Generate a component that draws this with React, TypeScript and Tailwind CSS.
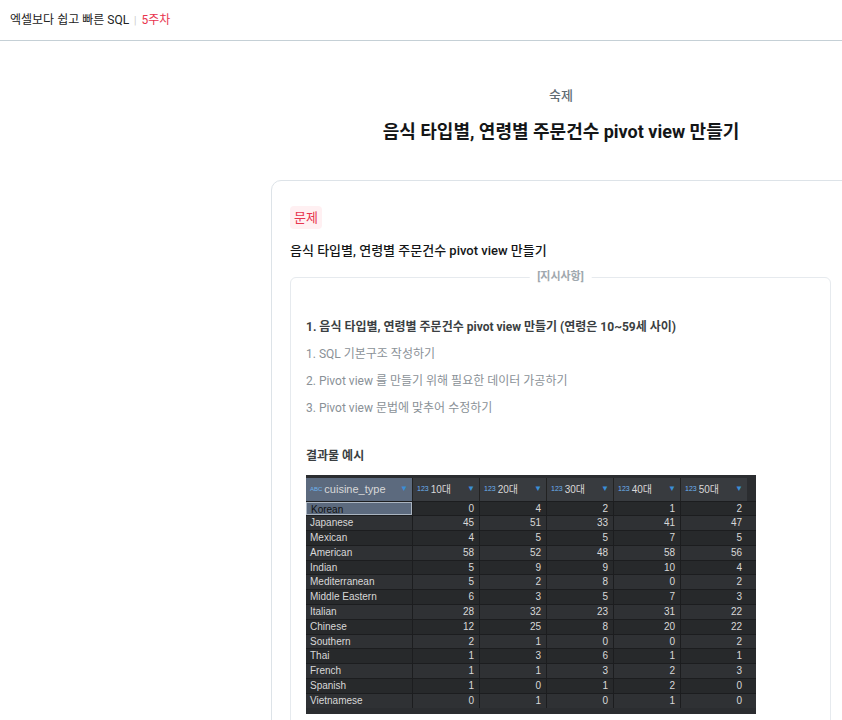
const rows: [string, number[]][] = [
  ["Korean", [0, 4, 2, 1, 2]],
  ["Japanese", [45, 51, 33, 41, 47]],
  ["Mexican", [4, 5, 5, 7, 5]],
  ["American", [58, 52, 48, 58, 56]],
  ["Indian", [5, 9, 9, 10, 4]],
  ["Mediterranean", [5, 2, 8, 0, 2]],
  ["Middle Eastern", [6, 3, 5, 7, 3]],
  ["Italian", [28, 32, 23, 31, 22]],
  ["Chinese", [12, 25, 8, 20, 22]],
  ["Southern", [2, 1, 0, 0, 2]],
  ["Thai", [1, 3, 6, 1, 1]],
  ["French", [1, 1, 3, 2, 3]],
  ["Spanish", [1, 0, 1, 2, 0]],
  ["Vietnamese", [0, 1, 0, 1, 0]],
];
const heads = ["10대", "20대", "30대", "40대", "50대"];
const Tri = () => <span className="text-[8px] text-[#3b8fd6] ml-auto">▼</span>;

export default function App() {
  return (
    <div className="w-[842px] h-[720px] overflow-hidden bg-white" style={{ fontFamily: "Roboto, 'Noto Sans CJK KR', sans-serif" }}>
      <div className="h-[41px] border-b border-[#c5d0d6] flex items-center px-[10px] text-[12px] text-[#222]">
        엑셀보다 쉽고 빠른 SQL<span className="mx-[5px] text-[#ccc] text-[10px]">|</span><span className="text-[#e8344e]">5주차</span>
      </div>
      <div className="ml-[271px] w-[580px]">
        <div className="text-center pt-[45px] text-[13px] text-[#5f6b73] font-medium">숙제</div>
        <div className="text-center mt-[12px] text-[18px] font-bold text-[#141617]">음식 타입별, 연령별 주문건수 pivot view 만들기</div>
        <div className="mt-[35px] w-[600px] border border-[#dde3e8] rounded-[10px] px-[18px] pt-[24px] h-[560px]">
          <span className="inline-block bg-[#fff0f2] text-[#e8344e] text-[13px] px-[4px] py-[2px] rounded-[4px]">문제</span>
          <div className="mt-[12px] text-[13px] font-medium text-[#141617]">음식 타입별, 연령별 주문건수 pivot view 만들기</div>
          <div className="relative mt-[16px] w-[541px] border border-[#e6eaee] rounded-[6px] px-[15px] pt-[40px] h-[500px]">
            <span className="absolute -top-[9px] left-1/2 -translate-x-1/2 bg-white px-[8px] text-[11px] font-bold text-[#a0a8ae]">[지시사항]</span>
            <div className="text-[12px] font-bold text-[#3b3f42]">1. 음식 타입별, 연령별 주문건수 pivot view 만들기 (연령은 10~59세 사이)</div>
            <div className="mt-[9px] text-[12px] text-[#8a9197]">1. SQL 기본구조 작성하기</div>
            <div className="mt-[9px] text-[12px] text-[#8a9197]">2. Pivot view 를 만들기 위해 필요한 데이터 가공하기</div>
            <div className="mt-[9px] text-[12px] text-[#8a9197]">3. Pivot view 문법에 맞추어 수정하기</div>
            <div className="mt-[30px] text-[12px] font-bold text-[#3b3f42]">결과물 예시</div>
            <div className="mt-[10px] w-[450px] bg-[#2b2d30] text-[10px] text-[#d8d8d8] pb-[6px]" style={{ fontFamily: "'Liberation Sans', 'Noto Sans CJK KR', sans-serif" }}>
              <div className="flex h-[26px] items-center pt-[3px]">
                <div className="w-[106px] h-full flex items-center bg-[#5c6a7e] px-[4px]"><span className="text-[6px] text-[#6cb2f0] mr-[2px]">ABC</span><span className="text-[11px]">cuisine_type</span><Tri /></div>
                {heads.map((h) => (
                  <div key={h} className="w-[67px] h-full flex items-center bg-[#383b3f] border-l border-[#222] px-[4px]"><span className="text-[7px] text-[#6cb2f0] mr-[2px]">123</span><span className="text-[10px]">{h}</span><Tri /></div>
                ))}
              </div>
              {rows.map(([n, v], i) => (
                <div key={n} className={`flex h-[14.8px] items-center border-t border-[#1c1d1f] ${i % 2 ? "bg-[#2f3134]" : "bg-[#27292b]"}`}>
                  <div className={`w-[106px] h-full px-[4px] leading-[14px] ${i === 0 ? "bg-[#5c6a7e] text-[#111] border border-[#aab4c0]" : ""}`}>{n}</div>
                  {v.map((x, j) => (
                    <div key={j} className="w-[67px] h-full border-l border-[#1c1d1f] text-right pr-[5px] leading-[14px]">{x}</div>
                  ))}
                </div>
              ))}
            </div>
          </div>
        </div>
      </div>
    </div>
  );
}
